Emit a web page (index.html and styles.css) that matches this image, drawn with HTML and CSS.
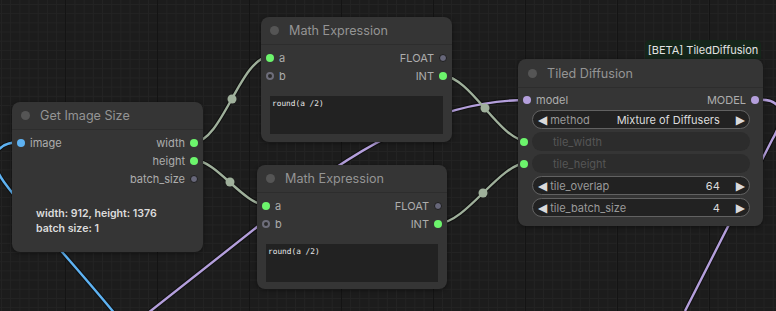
FILE: index.html
```html
<!DOCTYPE html>
<html lang="en">

<head>
  <meta charset="UTF-8">
  <meta name="viewport" content="width=device-width, initial-scale=1.0">
  <title>Graph</title>
  <link rel="stylesheet" href="styles.css">
</head>

<body>

  <div class="canvas">

    <svg class="links" width="776" height="311" viewBox="0 0 776 311">
      <g class="outline">
        <path d="M21 142 C-6 142,-12 160,4 182 C30 218,78 268,120 320" />
        <path d="M110 343 L290 201 C360 146,440 100,527 100" />
        <path d="M755 100 C784 97,786 116,772 140 L685 311" />
        <path d="M194 142 C222 142,241 57,269 57" />
        <path d="M194 160 C216 160,244 205,266 205" />
        <path d="M443 76 C470 76,500 141,527 141" />
        <path d="M439 223 C466 223,500 163,527 163" />
      </g>
      <path class="link blue" d="M21 142 C-6 142,-12 160,4 182 C30 218,78 268,120 320" />
      <path class="link purple" d="M110 343 L290 201 C360 146,440 100,527 100" />
      <path class="link purple" d="M755 100 C784 97,786 116,772 140 L685 311" />
      <path class="link sage" d="M194 142 C222 142,241 57,269 57" />
      <path class="link sage" d="M194 160 C216 160,244 205,266 205" />
      <path class="link sage" d="M443 76 C470 76,500 141,527 141" />
      <path class="link sage" d="M439 223 C466 223,500 163,527 163" />
      <circle class="mid" cx="232" cy="99" r="4.5" />
      <circle class="mid" cx="230" cy="182" r="4.5" />
      <circle class="mid" cx="485" cy="108" r="4.5" />
      <circle class="mid" cx="483" cy="193" r="4.5" />
    </svg>

    <!-- Get Image Size -->
    <div class="node node-size">
      <div class="title"><span class="tdot"></span>Get Image Size</div>
      <div class="slots">
        <div class="row">
          <span class="in"><i class="slot blue"></i>image</span>
          <span class="out">width<i class="slot green"></i></span>
        </div>
        <div class="row">
          <span class="in"></span>
          <span class="out">height<i class="slot green"></i></span>
        </div>
        <div class="row">
          <span class="in"></span>
          <span class="out">batch_size<i class="slot off"></i></span>
        </div>
      </div>
      <div class="info">width: 912, height: 1376<br>batch size: 1</div>
    </div>

    <!-- Math Expression (top) -->
    <div class="node node-math1">
      <div class="title"><span class="tdot"></span>Math Expression</div>
      <div class="slots">
        <div class="row">
          <span class="in"><i class="slot green"></i>a</span>
          <span class="out">FLOAT<i class="slot off"></i></span>
        </div>
        <div class="row">
          <span class="in"><i class="slot ring"></i>b</span>
          <span class="out">INT<i class="slot green"></i></span>
        </div>
      </div>
      <div class="expr">round(a /2)</div>
    </div>

    <!-- Math Expression (bottom) -->
    <div class="node node-math2">
      <div class="title"><span class="tdot"></span>Math Expression</div>
      <div class="slots">
        <div class="row">
          <span class="in"><i class="slot green"></i>a</span>
          <span class="out">FLOAT<i class="slot off"></i></span>
        </div>
        <div class="row">
          <span class="in"><i class="slot ring"></i>b</span>
          <span class="out">INT<i class="slot green"></i></span>
        </div>
      </div>
      <div class="expr">round(a /2)</div>
    </div>

    <!-- Tiled Diffusion -->
    <div class="badge">[BETA] TiledDiffusion</div>
    <div class="node node-tiled">
      <div class="title"><span class="tdot"></span>Tiled Diffusion</div>
      <div class="slots">
        <div class="row">
          <span class="in"><i class="slot purple"></i>model</span>
          <span class="out">MODEL<i class="slot purple"></i></span>
        </div>
      </div>
      <div class="widgets">
        <div class="widget">
          <span class="arrow">&#9664;</span>
          <span class="wlabel">method</span>
          <span class="wvalue">Mixture of Diffusers</span>
          <span class="arrow">&#9654;</span>
        </div>
        <div class="widget disabled">
          <i class="slot green wdot"></i>
          <span class="wlabel">tile_width</span>
        </div>
        <div class="widget disabled">
          <i class="slot green wdot"></i>
          <span class="wlabel">tile_height</span>
        </div>
        <div class="widget">
          <span class="arrow">&#9664;</span>
          <span class="wlabel">tile_overlap</span>
          <span class="wvalue">64</span>
          <span class="arrow">&#9654;</span>
        </div>
        <div class="widget">
          <span class="arrow">&#9664;</span>
          <span class="wlabel">tile_batch_size</span>
          <span class="wvalue">4</span>
          <span class="arrow">&#9654;</span>
        </div>
      </div>
    </div>

  </div>

</body>

</html>
```

FILE: styles.css
```css
body {
  margin: 0;
  padding: 0;
  font-family: 'Inter', 'Liberation Sans', sans-serif;
  background-color: #1b1b1b;
  overflow: hidden;
}

.canvas {
  position: relative;
  width: 776px;
  height: 311px;
  overflow: hidden;
  background-color: #1c1c1c;
  background-image:
    linear-gradient(to right, #141414 1px, transparent 1px),
    linear-gradient(to right, #232323 1px, transparent 1px),
    linear-gradient(to bottom, #232323 1px, transparent 1px);
  background-size: 92px 100%, 9.2px 100%, 100% 9.2px;
  background-position: 65px 0, 1px 0, 0 4px;
}

/* links */
.links {
  position: absolute;
  left: 0;
  top: 0;
}

.outline path {
  fill: none;
  stroke: #111;
  stroke-width: 4.5;
}

.link {
  fill: none;
  stroke-width: 2.4;
}

.link.sage {
  stroke: #9fb09b;
}

.link.purple {
  stroke: #b49fdc;
}

.link.blue {
  stroke: #5eb2f2;
}

.mid {
  fill: #9fb09b;
}

/* nodes */
.node {
  position: absolute;
  background-color: #353535;
  border-radius: 8px;
  box-shadow: 0 1px 4px rgba(0, 0, 0, 0.45);
  color: #aaa;
  display: flex;
  flex-direction: column;
}

.node-size {
  left: 12px;
  top: 102px;
  width: 191px;
  height: 150px;
}

.node-math1 {
  left: 261px;
  top: 17px;
  width: 191px;
  height: 125px;
}

.node-math2 {
  left: 257px;
  top: 165px;
  width: 190px;
  height: 124px;
}

.node-tiled {
  left: 518px;
  top: 59px;
  width: 245px;
  height: 167px;
}

.title {
  height: 27px;
  display: flex;
  align-items: center;
  padding-left: 9px;
  font-size: 12.6px;
  color: #949494;
  border-bottom: 1px solid #2d2d2d;
}

.node-tiled .title {
  height: 28px;
  padding-left: 10px;
}

.tdot {
  width: 9px;
  height: 9px;
  border-radius: 50%;
  background-color: #555;
  margin-right: 10px;
}

.slots {
  padding: 4px 5px 0 5px;
}

.node-tiled .slots {
  padding-top: 3px;
  padding-right: 4px;
}

.row {
  height: 18px;
  display: flex;
  align-items: center;
  justify-content: space-between;
  font-size: 11px;
  color: #adadad;
}

.in,
.out {
  display: flex;
  align-items: center;
  gap: 5px;
}

.slot {
  display: block;
  width: 8px;
  height: 8px;
  border-radius: 50%;
  box-sizing: border-box;
}

.slot.green {
  background-color: #6cf56c;
}

.slot.blue {
  background-color: #5eb2f2;
}

.slot.purple {
  background-color: #b49fdc;
}

.slot.off {
  background-color: #67677a;
  border: 1px solid #1e1e1e;
}

.slot.ring {
  background-color: #2a2a2a;
  border: 2px solid #6d6d7a;
}

.info {
  margin-top: 18px;
  padding-left: 24px;
  font-size: 10.6px;
  line-height: 15px;
  font-weight: 600;
  color: #dcdcdc;
}

.expr {
  margin: 11px 9px 0 9px;
  height: 38px;
  background-color: #222;
  font-family: 'DejaVu Sans Mono', 'Liberation Mono', monospace;
  font-size: 7.8px;
  color: #e8e8e8;
  padding: 3px 2px;
  box-sizing: border-box;
}

/* widgets */
.widgets {
  display: flex;
  flex-direction: column;
  gap: 3px;
  margin: 1px 13px 0 14px;
}

.widget {
  position: relative;
  height: 19px;
  box-sizing: border-box;
  border: 1px solid #626262;
  border-radius: 10px;
  background-color: #222;
  display: flex;
  align-items: center;
  padding: 0 4px 0 5px;
  font-size: 11px;
}

.widget.disabled {
  border-color: transparent;
  background-color: #2c2c2c;
  padding-left: 17px;
}

.arrow {
  color: #dadada;
  font-size: 12px;
  line-height: 1;
  font-family: 'DejaVu Sans', sans-serif;
}

.wlabel {
  margin-left: 3px;
  color: #9a9a9a;
}

.disabled .wlabel {
  color: #565656;
}

.wvalue {
  margin-left: auto;
  margin-right: 16px;
  color: #dcdcdc;
}

.wdot {
  position: absolute;
  left: -13px;
  top: 5px;
}

.badge {
  position: absolute;
  left: 645px;
  top: 40px;
  width: 116px;
  height: 19px;
  border-radius: 5px 5px 0 0;
  background-color: #15261a;
  color: #e2e2e2;
  font-size: 11px;
  display: flex;
  align-items: center;
  justify-content: center;
}
```
